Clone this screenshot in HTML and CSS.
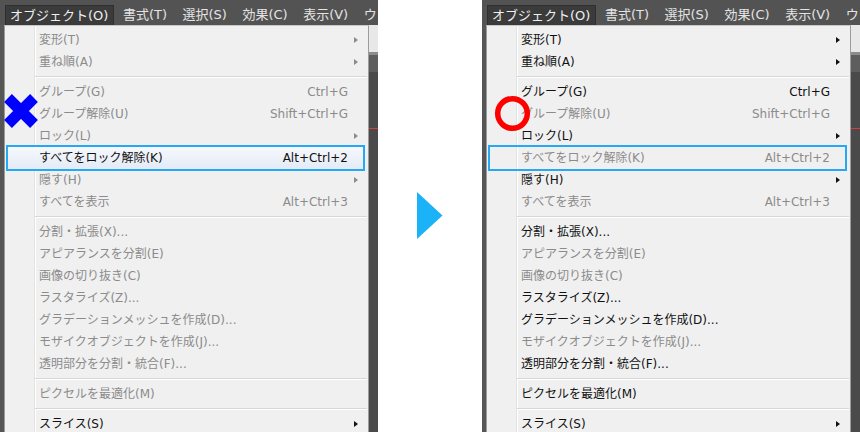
FILE: index.html
```html
<!DOCTYPE html>
<html lang="ja">
<head>
  <meta charset="UTF-8">
  <title>すべてをロック解除</title>
  <link rel="stylesheet" href="styles.css">
</head>
<body>

<div class="page">

  <!-- 前：選択中の項目が有効 -->
  <div class="shot">
    <div class="menubar">
      <span class="mb-item open">オブジェクト(O)</span>
      <span class="mb-item">書式(T)</span>
      <span class="mb-item">選択(S)</span>
      <span class="mb-item">効果(C)</span>
      <span class="mb-item">表示(V)</span>
      <span class="mb-item">ウ</span>
    </div>
    <div class="dropdown">
      <div class="mi off sub"><span class="label">変形(T)</span></div>
      <div class="mi off sub"><span class="label">重ね順(A)</span></div>
      <div class="sep"></div>
      <div class="mi off"><span class="label">グループ(G)</span><span class="key">Ctrl+G</span></div>
      <div class="mi off"><span class="label">グループ解除(U)</span><span class="key">Shift+Ctrl+G</span></div>
      <div class="mi off sub"><span class="label">ロック(L)</span></div>
      <div class="mi hot lit"><span class="label">すべてをロック解除(K)</span><span class="key">Alt+Ctrl+2</span></div>
      <div class="mi off sub"><span class="label">隠す(H)</span></div>
      <div class="mi off"><span class="label">すべてを表示</span><span class="key">Alt+Ctrl+3</span></div>
      <div class="sep"></div>
      <div class="mi off"><span class="label">分割・拡張(X)...</span></div>
      <div class="mi off"><span class="label">アピアランスを分割(E)</span></div>
      <div class="mi off"><span class="label">画像の切り抜き(C)</span></div>
      <div class="mi off"><span class="label">ラスタライズ(Z)...</span></div>
      <div class="mi off"><span class="label">グラデーションメッシュを作成(D)...</span></div>
      <div class="mi off"><span class="label">モザイクオブジェクトを作成(J)...</span></div>
      <div class="mi off"><span class="label">透明部分を分割・統合(F)...</span></div>
      <div class="sep"></div>
      <div class="mi off"><span class="label">ピクセルを最適化(M)</span></div>
      <div class="sep"></div>
      <div class="mi sub"><span class="label">スライス(S)</span></div>
    </div>
    <svg class="mark mark-x" width="40" height="40" viewBox="0 0 40 40">
      <path d="M7 7 L33 33 M33 7 L7 33" stroke="#0000ff" stroke-width="11" fill="none"/>
    </svg>
  </div>

  <div class="between">
    <svg width="26" height="48" viewBox="0 0 26 48">
      <polygon points="0,0 25.5,23.5 0,47" fill="#1cb2f7"/>
    </svg>
  </div>

  <!-- 後：ロック解除のあと -->
  <div class="shot">
    <div class="menubar">
      <span class="mb-item open">オブジェクト(O)</span>
      <span class="mb-item">書式(T)</span>
      <span class="mb-item">選択(S)</span>
      <span class="mb-item">効果(C)</span>
      <span class="mb-item">表示(V)</span>
      <span class="mb-item">ウ</span>
    </div>
    <div class="dropdown">
      <div class="mi sub"><span class="label">変形(T)</span></div>
      <div class="mi sub"><span class="label">重ね順(A)</span></div>
      <div class="sep"></div>
      <div class="mi"><span class="label">グループ(G)</span><span class="key">Ctrl+G</span></div>
      <div class="mi off"><span class="label">グループ解除(U)</span><span class="key">Shift+Ctrl+G</span></div>
      <div class="mi sub"><span class="label">ロック(L)</span></div>
      <div class="mi off hot"><span class="label">すべてをロック解除(K)</span><span class="key">Alt+Ctrl+2</span></div>
      <div class="mi sub"><span class="label">隠す(H)</span></div>
      <div class="mi off"><span class="label">すべてを表示</span><span class="key">Alt+Ctrl+3</span></div>
      <div class="sep"></div>
      <div class="mi"><span class="label">分割・拡張(X)...</span></div>
      <div class="mi off"><span class="label">アピアランスを分割(E)</span></div>
      <div class="mi off"><span class="label">画像の切り抜き(C)</span></div>
      <div class="mi"><span class="label">ラスタライズ(Z)...</span></div>
      <div class="mi"><span class="label">グラデーションメッシュを作成(D)...</span></div>
      <div class="mi off"><span class="label">モザイクオブジェクトを作成(J)...</span></div>
      <div class="mi"><span class="label">透明部分を分割・統合(F)...</span></div>
      <div class="sep"></div>
      <div class="mi"><span class="label">ピクセルを最適化(M)</span></div>
      <div class="sep"></div>
      <div class="mi sub"><span class="label">スライス(S)</span></div>
    </div>
    <svg class="mark mark-o" width="41" height="41" viewBox="0 0 41 41">
      <circle cx="20.5" cy="20.5" r="14.8" stroke="#ff0000" stroke-width="5.5" fill="none"/>
    </svg>
  </div>

</div>

</body>
</html>
```

FILE: styles.css
```css
body { margin: 0; background: #fff; font-family: "DejaVu Sans", "Noto Sans CJK JP", sans-serif; }
.page { display: flex; width: 860px; height: 432px; }

/* スクリーンショット1枚分 */
.shot {
  position: relative; flex-shrink: 0; width: 378px; height: 432px; overflow: hidden;
  background:
    linear-gradient(to bottom, #535353 0 25px, #e8e8e8 25px 52px, #8c8c8c 52px 55px,
      #5e5e5e 55px 72px, #4a4a4a 72px 128px, #d04040 128px 129px, #4a4a4a 129px)
    right top / 10px 100% no-repeat,
    #565656;
}
.between { flex: 1; display: flex; align-items: center; justify-content: center; }

/* メニューバー */
.menubar {
  display: flex; gap: 2.5px; height: 25px; padding-left: 5px; box-sizing: border-box;
  background: #535353; color: #e4e4e4; font-size: 13px; white-space: nowrap;
}
.mb-item { flex-shrink: 0; margin-top: 5px; height: 20px; line-height: 19px; padding: 0 7px 0 6px; box-sizing: border-box; }
.mb-item.open { background: #3b3b3b; border: 1px solid #2f2f2f; border-bottom: 0; padding-left: 4px; padding-right: 5px; color: #f0f0f0; }

/* ドロップダウン */
.dropdown {
  margin-left: 4px; width: 365px; box-sizing: border-box; padding-top: 3px;
  border: 1px solid #9c9c9c; border-top-color: #c8c8c8;
  background: linear-gradient(to right, #f0f0f0 29px, #e2e3e3 29px 30px, #fff 30px 31px, #f0f0f0 31px);
  font-size: 12px; color: #111;
}
.mi { position: relative; display: flex; height: 22px; line-height: 22px; margin: 0 5px 0 3px; padding: 0 15px 0 31px; white-space: nowrap; }
.mi .label { flex: 1; }
.mi.off { color: #8b8b8b; }
.mi.sub::after {
  content: ""; position: absolute; right: 5px; top: 8px;
  border-left: 4px solid currentColor; border-top: 3.5px solid transparent; border-bottom: 3.5px solid transparent;
}
.mi.hot { box-shadow: 0 0 0 2px #27a8f4; }
.mi.hot.lit { background: linear-gradient(#f6f9fd, #e4ebf6); }
.sep { margin: 3px 1px 3px 30px; border-top: 1px solid #d7d7d7; border-bottom: 1px solid #fff; }

/* 注釈マーク */
.mark { position: absolute; }
.mark-x { left: 1px; top: 91px; }
.mark-o { left: 10px; top: 93px; }
```
